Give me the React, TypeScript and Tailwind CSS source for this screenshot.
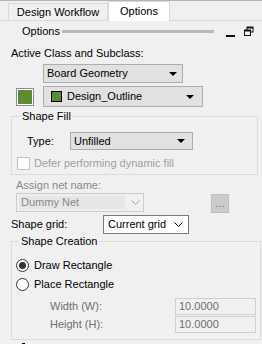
import React from "react";

const Caret = () => (
  <svg width="8" height="4" viewBox="0 0 8 4" className="shrink-0">
    <polygon points="0,0 8,0 4,4" fill="#000" />
  </svg>
);

const Chevron = ({ color = "#000" }: { color?: string }) => (
  <svg width="9" height="5" viewBox="0 0 9 5" className="shrink-0">
    <polyline points="0.5,0.5 4.5,4.5 8.5,0.5" fill="none" stroke={color} strokeWidth="1" />
  </svg>
);

const Radio = ({ checked }: { checked?: boolean }) => (
  <span className="w-[13px] h-[13px] rounded-full border border-[#333] bg-white flex items-center justify-center shrink-0">
    {checked && <span className="w-[7px] h-[7px] rounded-full bg-[#333]" />}
  </span>
);

export default function App() {
  return (
    <div className="w-[262px] h-[344px] bg-[#f0f0f0] overflow-hidden text-[11px] text-black font-['Liberation_Sans',Arial,sans-serif] leading-none">
      {/* tab strip */}
      <div className="flex items-end h-[21px] border-t border-[#b4b4b4] border-b border-b-[#d9d9d9] pl-[8px]">
        <div className="h-[17px] w-[100px] border border-b-0 border-[#d9d9d9] flex items-center justify-center">
          Design Workflow
        </div>
        <div className="h-[20px] w-[62px] bg-white border border-b-0 border-[#d9d9d9] -mb-px flex items-center justify-center">
          Options
        </div>
      </div>

      {/* panel header */}
      <div className="h-[21px] flex items-center pl-[22px]">
        <span>Options</span>
        <span className="ml-[2px] w-[152px] h-[3px] bg-[#bababa]" />
        <span className="ml-[12px] mt-[8px] w-[9px] h-[2px] bg-[#111]" />
        <svg width="10" height="10" viewBox="0 0 10 10" className="ml-[9px] -mt-[2px]">
          <rect x="3" y="1" width="6" height="5" fill="none" stroke="#111" strokeWidth="1" />
          <rect x="3" y="1" width="6" height="1.5" fill="#111" />
          <rect x="0.5" y="4" width="6" height="5.5" fill="#f0f0f0" stroke="#111" strokeWidth="1" />
          <rect x="0.5" y="4" width="6" height="1.5" fill="#111" />
        </svg>
      </div>

      <div className="pl-[11px] pr-[4px]">
        <div className="mt-[6px]">Active Class and Subclass:</div>

        <div className="ml-[32px] mt-[5px] w-[140px] h-[19px] bg-[#e1e1e1] border border-[#adadad] flex items-center pl-[3px] pr-[5px] justify-between">
          <span>Board Geometry</span>
          <Caret />
        </div>

        <div className="flex items-center mt-[3px]">
          <span className="ml-[5px] w-[18px] h-[18px] border border-[#8d8d8d] p-px bg-white">
            <span className="block w-full h-full bg-[#5d8a32]" />
          </span>
          <div className="ml-[9px] w-[160px] h-[21px] bg-[#e1e1e1] border border-[#adadad] flex items-center pl-[7px] pr-[8px]">
            <span className="w-[11px] h-[11px] border border-black bg-[#5d8a32]" />
            <span className="ml-[5px] flex-1">Design_Outline</span>
            <Caret />
          </div>
        </div>

        <fieldset className="mt-[4px] border border-[#dcdcdc] px-[5px] pb-[4px] w-[247px]">
          <legend className="ml-[3px] px-[2px]">Shape Fill</legend>
          <div className="flex items-center mt-[10px]">
            <span className="ml-[10px] w-[43px]">Type:</span>
            <div className="w-[123px] h-[18px] bg-[#e1e1e1] border border-[#adadad] flex items-center pl-[3px] pr-[7px] justify-between">
              <span>Unfilled</span>
              <Caret />
            </div>
          </div>
          <div className="flex items-center mt-[7px] text-[#a0a0a0]">
            <span className="w-[13px] h-[13px] border border-[#c4c4c4] bg-[#fcfcfc]" />
            <span className="ml-[4px]">Defer performing dynamic fill</span>
          </div>
        </fieldset>

        <div className="ml-[5px] mt-[5px] text-[#8a8a8a]">Assign net name:</div>
        <div className="flex items-start mt-[2px] ml-[5px]">
          <div className="w-[128px] h-[19px] border border-[#cccccc] bg-[#f0f0f0] flex items-center p-[2px]">
            <span className="w-[106px] h-full bg-[#e6e6e6] text-[#8a8a8a] flex items-center pl-[2px]">Dummy Net</span>
            <span className="ml-[6px]"><Chevron color="#a0a0a0" /></span>
          </div>
          <div className="ml-[67px] mt-[1px] w-[18px] h-[19px] bg-[#cccccc] border border-[#bfbfbf] flex items-end justify-center pb-[3px] text-[#7a7a7a]">
            ...
          </div>
        </div>

        <div className="flex items-center mt-[2px]">
          <span className="w-[92px]">Shape grid:</span>
          <div className="w-[86px] h-[19px] bg-white border border-[#7a7a7a] flex items-center pl-[4px] pr-[5px] justify-between">
            <span>Current grid</span>
            <Chevron />
          </div>
        </div>

        <fieldset className="mt-[2px] border border-[#dcdcdc] px-[4px] pb-[6px] w-[247px] h-[104px]">
          <legend className="ml-[3px] px-[2px]">Shape Creation</legend>
          <div className="flex items-center mt-[12px]">
            <Radio checked />
            <span className="ml-[5px]">Draw Rectangle</span>
          </div>
          <div className="flex items-center mt-[6px]">
            <Radio />
            <span className="ml-[5px]">Place Rectangle</span>
          </div>
          <div className="flex items-center mt-[7px] text-[#6e6e6e]">
            <span className="ml-[34px] w-[125px]">Width (W):</span>
            <span className="w-[81px] h-[17px] border border-[#cfcfcf] flex items-center pl-[3px]">10.0000</span>
          </div>
          <div className="flex items-center mt-[1px] text-[#6e6e6e]">
            <span className="ml-[34px] w-[125px]">Height (H):</span>
            <span className="w-[81px] h-[17px] border border-[#cfcfcf] flex items-center pl-[3px]">10.0000</span>
          </div>
        </fieldset>
      </div>
      <div className="ml-[22px] mt-[3px] w-[3px] h-[3px] bg-black" />
    </div>
  );
}
